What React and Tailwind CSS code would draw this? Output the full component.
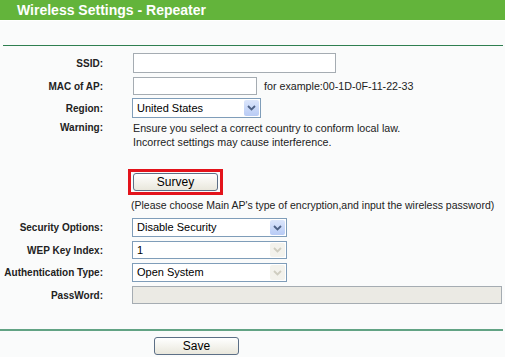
import React from "react";

const font = { fontFamily: '"Liberation Sans", Arial, sans-serif' };

function Label({ children }) {
  return (
    <div className="w-[104px] shrink-0 pr-[1px] text-right text-[10px] font-bold text-[#222]">
      {children}
    </div>
  );
}

function Arrow({ disabled }) {
  return (
    <div
      className={
        "absolute right-[1px] top-[1px] bottom-[1px] w-[15px] flex items-center justify-center rounded-[2px] " +
        (disabled ? "bg-[#f3f2ec]" : "bg-gradient-to-b from-[#dce6fb] to-[#b8cbf5]")
      }
    >
      <svg width="9" height="6" viewBox="0 0 9 6">
        <path
          d="M1 1 L4.5 4.5 L8 1"
          fill="none"
          stroke={disabled ? "#cfcdc0" : "#4d6185"}
          strokeWidth="1.8"
        />
      </svg>
    </div>
  );
}

function Select({ value, width, height, disabled }) {
  return (
    <div
      className="relative bg-white border border-[#7f9db9] flex items-center pl-[4px] text-[11px] text-black"
      style={{ width, height }}
    >
      {value}
      <Arrow disabled={disabled} />
    </div>
  );
}

function Row({ label, children, className = "" }) {
  return (
    <div className={"flex items-center " + className}>
      <Label>{label}</Label>
      <div className="ml-[28px] flex items-center">{children}</div>
    </div>
  );
}

function Button({ children, className = "" }) {
  return (
    <div
      className={
        "flex items-center justify-center rounded-[3px] border border-[#5c6f86] bg-gradient-to-b from-white to-[#e9e7dc] text-[12px] text-black " +
        className
      }
    >
      {children}
    </div>
  );
}

export default function App() {
  return (
    <div className="w-[505px] h-[357px] bg-[#fafbfb] overflow-hidden" style={font}>
      <div className="h-[20px] bg-[#63b43b] pl-[17px] text-[14px] leading-[20px] font-bold text-white">
        Wireless Settings - Repeater
      </div>
      <div className="h-px bg-white" />

      <div className="mt-[24px] ml-[3px] mr-[2px] h-px bg-[#2f7f50]" />

      <Row label="SSID:" className="mt-[7px]">
        <div className="ml-[1px] w-[203px] h-[20px] bg-white border border-[#a5acb2]" />
      </Row>

      <Row label="MAC of AP:" className="mt-[4px]">
        <div className="ml-[1px] w-[124px] h-[18px] bg-white border border-[#a5acb2]" />
        <span className="ml-[7px] text-[10.7px] text-[#222]">for example:00-1D-0F-11-22-33</span>
      </Row>

      <Row label="Region:" className="mt-[3px]">
        <Select value="United States" width={129} height={20} />
      </Row>

      <div className="mt-[3px] flex">
        <Label>
          <div className="leading-[14px]">Warning:</div>
        </Label>
        <div className="ml-[29px] text-[10.7px] leading-[14px] text-[#222]">
          <div>Ensure you select a correct country to conform local law.</div>
          <div>Incorrect settings may cause interference.</div>
        </div>
      </div>

      <div className="mt-[20px] ml-[128px] w-[95px] h-[26px] border-[3px] border-[#e3131b] flex items-center justify-center">
        <Button className="w-[85px] h-[18px]">Survey</Button>
      </div>

      <div className="mt-[3px] ml-[131px] text-[10.5px] leading-[14px] text-[#222] whitespace-nowrap">
        (Please choose Main AP's type of encryption,and input the wireless password)
      </div>

      <Row label="Security Options:" className="mt-[6px]">
        <Select value="Disable Security" width={155} height={19} />
      </Row>

      <Row label="WEP Key Index:" className="mt-[4px]">
        <Select value="1" width={155} height={18} disabled />
      </Row>

      <Row label="Authentication Type:" className="mt-[4px]">
        <Select value="Open System" width={155} height={19} disabled />
      </Row>

      <Row label="PassWord:" className="mt-[4px]">
        <div className="w-[370px] h-[18px] bg-[#ebeae4] border border-[#a5acb2]" />
      </Row>

      <div className="mt-[25px] mr-[2px] h-[2px] bg-[#62a384]" />

      <Button className="mt-[6px] ml-[154px] w-[85px] h-[18px]">Save</Button>
    </div>
  );
}
